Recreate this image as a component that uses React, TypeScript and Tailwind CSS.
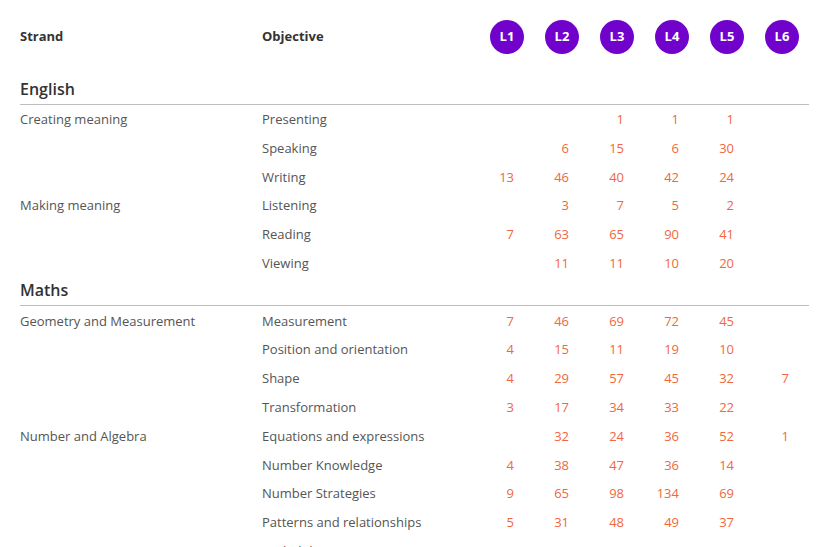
type Row = { strand?: string; objective: string; levels: (number | null)[] }
type Section = { title: string; rows: Row[] }

const sections: Section[] = [
  {
    title: "English",
    rows: [
      { strand: "Creating meaning", objective: "Presenting", levels: [null, null, 1, 1, 1, null] },
      { objective: "Speaking", levels: [null, 6, 15, 6, 30, null] },
      { objective: "Writing", levels: [13, 46, 40, 42, 24, null] },
      { strand: "Making meaning", objective: "Listening", levels: [null, 3, 7, 5, 2, null] },
      { objective: "Reading", levels: [7, 63, 65, 90, 41, null] },
      { objective: "Viewing", levels: [null, 11, 11, 10, 20, null] },
    ],
  },
  {
    title: "Maths",
    rows: [
      { strand: "Geometry and Measurement", objective: "Measurement", levels: [7, 46, 69, 72, 45, null] },
      { objective: "Position and orientation", levels: [4, 15, 11, 19, 10, null] },
      { objective: "Shape", levels: [4, 29, 57, 45, 32, 7] },
      { objective: "Transformation", levels: [3, 17, 34, 33, 22, null] },
      { strand: "Number and Algebra", objective: "Equations and expressions", levels: [null, 32, 24, 36, 52, 1] },
      { objective: "Number Knowledge", levels: [4, 38, 47, 36, 14, null] },
      { objective: "Number Strategies", levels: [9, 65, 98, 134, 69, null] },
      { objective: "Patterns and relationships", levels: [5, 31, 48, 49, 37, null] },
      { strand: "Statistics", objective: "Probability", levels: [3, 18, 26, 26, 20, null] },
      { objective: "Statistical investigation", levels: [6, 22, 30, 28, 17, null] },
    ],
  },
]

const grid = "grid grid-cols-[242px_217px_repeat(6,55px)]"

export default function App() {
  return (
    <div className="w-[818px] min-h-[547px] bg-white pl-[20px] text-[13px] text-[#555]" style={{ fontFamily: '"Open Sans", sans-serif' }}>
      <div className="w-[789px]">
        {/* header */}
        <div className={`${grid} h-[76px] pt-[19px] font-bold text-[#333]`}>
          <div className="h-[35px] flex items-center pt-[1px]">Strand</div>
          <div className="h-[35px] flex items-center pt-[1px]">Objective</div>
          {["L1", "L2", "L3", "L4", "L5", "L6"].map((l) => (
            <div key={l} className="pl-[11px] pt-[1px]">
              <div className="w-[34px] h-[34px] rounded-full bg-[#7102cc] text-white text-[13px] flex items-center justify-center">
                {l}
              </div>
            </div>
          ))}
        </div>

        {sections.map((s) => (
          <div key={s.title}>
            <div className="h-[28.8px] flex items-end pb-[4px] border-b border-[#bdbdbd]">
              <h2 className="text-[16px] leading-[22px] font-semibold text-[#333]">{s.title}</h2>
            </div>
            {s.rows.map((r) => (
              <div key={r.objective} className={`${grid} h-[28.8px] items-center pt-[1px]`}>
                <div>{r.strand ?? ""}</div>
                <div className="whitespace-nowrap">{r.objective}</div>
                {r.levels.map((v, i) => (
                  <div key={i} className="text-right pr-[20px] text-[#f2673d]">
                    {v ?? ""}
                  </div>
                ))}
              </div>
            ))}
          </div>
        ))}
      </div>
    </div>
  )
}
